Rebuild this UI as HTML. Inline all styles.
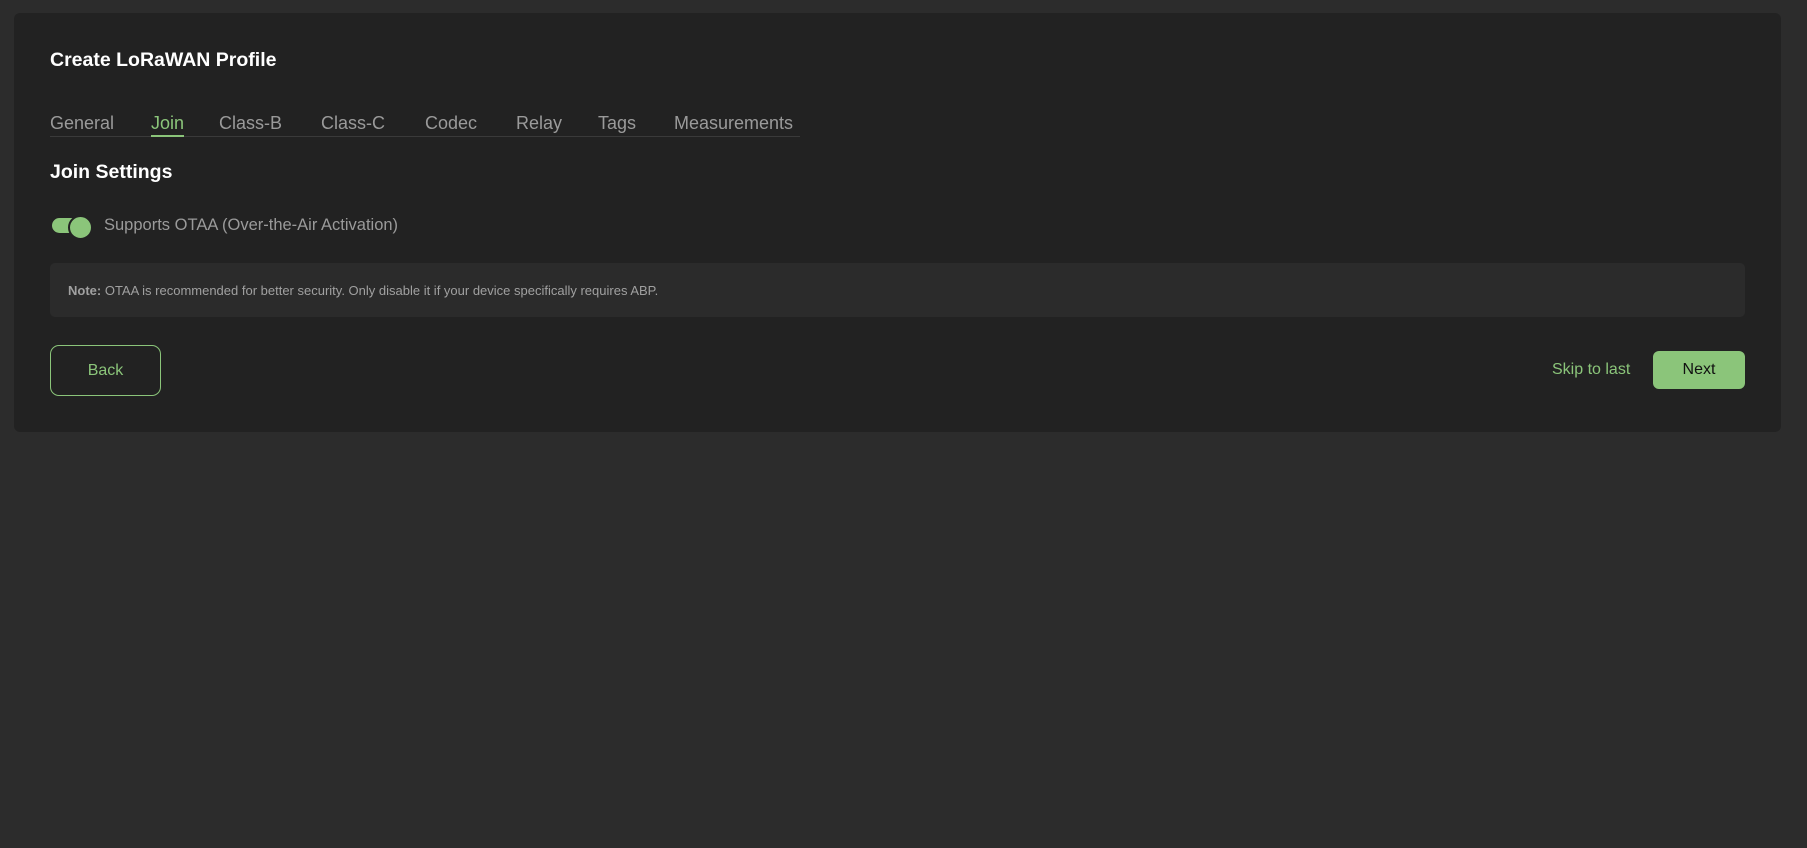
<!DOCTYPE html>
<html><head><style>
*{box-sizing:border-box;margin:0;padding:0}
body{width:1807px;height:848px;background:#2c2c2c;font-family:"Liberation Sans",sans-serif;position:relative;overflow:hidden}
.card{position:absolute;left:14px;top:13px;width:1767px;height:419px;background:#222;border-radius:6px}
.abs{position:absolute;white-space:nowrap}
h1{position:absolute;left:50px;top:49px;font-size:19.5px;font-weight:bold;color:#fff}
.tabs{position:absolute;left:50px;top:111px;width:750px;height:26px;border-bottom:1px solid #3a3a3a}
.tab{position:absolute;top:2px;font-size:18px;color:#9a9a9a}
.tab.on{color:#8bc57a;border-bottom:2px solid #8bc57a;height:24px}
h2{position:absolute;left:50px;top:161px;font-size:19.5px;font-weight:bold;color:#fff}
.tg{position:absolute;left:52px;top:218px;width:40px;height:15px;border-radius:8px;background:#8bc57a}
.tg::after{content:"";position:absolute;right:-1px;top:-3px;width:21px;height:21px;border-radius:50%;background:#8bc57a;border:2px solid #222}
.note{position:absolute;left:50px;top:263px;width:1695px;height:54px;background:#2b2b2b;border-radius:5px;font-size:13px;color:#a0a0a0;padding:20px 18px}
.back{position:absolute;left:50px;top:345px;width:111px;height:51px;border:1px solid #8bc57a;border-radius:9px;color:#8bc57a;font-size:16px;text-align:center;line-height:49px}
.next{position:absolute;left:1653px;top:351px;width:92px;height:38px;background:#8bc57a;border-radius:6px;color:#111;font-size:16px;text-align:center;line-height:38px}
.skip{position:absolute;left:1552px;top:361px;color:#8bc57a;font-size:16px}
</style></head><body>
<div class="card"></div>
<h1>Create LoRaWAN Profile</h1>
<div class="tabs">
<span class="tab" style="left:0">General</span>
<span class="tab on" style="left:101px">Join</span>
<span class="tab" style="left:169px">Class-B</span>
<span class="tab" style="left:271px">Class-C</span>
<span class="tab" style="left:375px">Codec</span>
<span class="tab" style="left:466px">Relay</span>
<span class="tab" style="left:548px">Tags</span>
<span class="tab" style="left:624px">Measurements</span>
</div>
<h2>Join Settings</h2>
<div class="tg"></div>
<div class="abs" style="left:104px;top:216px;font-size:16.5px;color:#9a9a9a">Supports OTAA (Over-the-Air Activation)</div>
<div class="note"><b>Note:</b> OTAA is recommended for better security. Only disable it if your device specifically requires ABP.</div>
<div class="back">Back</div>
<div class="skip">Skip to last</div>
<div class="next">Next</div>
</body></html>
